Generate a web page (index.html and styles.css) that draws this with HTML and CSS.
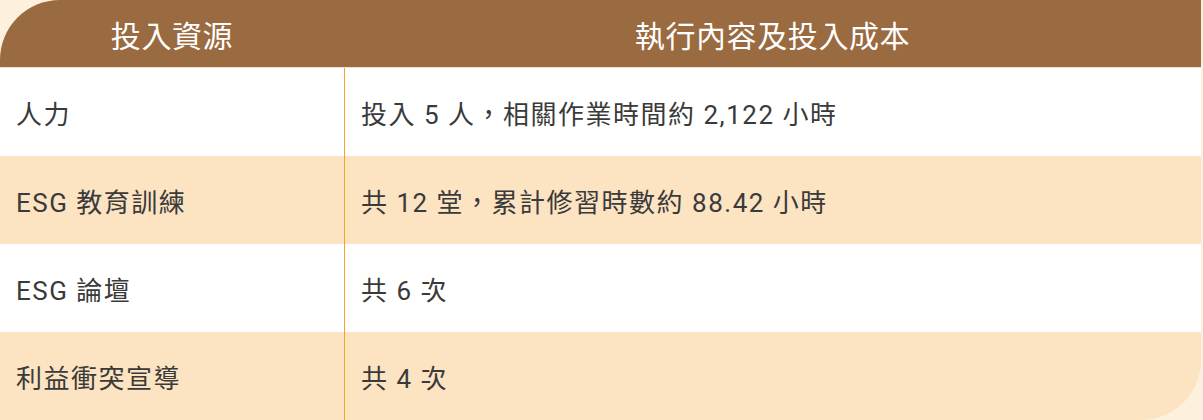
FILE: index.html
```html
<!DOCTYPE html>
<html lang="zh-Hant">
<head>
<meta charset="utf-8">
<title>投入資源</title>
<link rel="stylesheet" href="styles.css">
</head>
<body>
<div class="table">
  <div class="head head-first">投入資源</div>
  <div class="head">執行內容及投入成本</div>

  <div class="cell">人力</div>
  <div class="cell cell-2">投入 5 人，相關作業時間約 2,122 小時</div>

  <div class="cell alt">ESG 教育訓練</div>
  <div class="cell cell-2 alt">共 12 堂，累計修習時數約 88.42 小時</div>

  <div class="cell">ESG 論壇</div>
  <div class="cell cell-2">共 6 次</div>

  <div class="cell alt">利益衝突宣導</div>
  <div class="cell cell-2 alt last">共 4 次</div>
</div>
</body>
</html>
```
FILE: styles.css
```css
html, body {
  margin: 0;
  padding: 0;
  background: #fdf0dc;
}
body {
  width: 1203px;
  height: 420px;
  overflow: hidden;
}
.table {
  width: 1201px;
  display: grid;
  grid-template-columns: 344px 1fr;
  grid-template-rows: 68px repeat(4, 88px);
  font-family: Roboto, "Noto Sans CJK TC", sans-serif;
  color: #3a3a3a;
}
.head {
  background: #9a6a41;
  color: #ffffff;
  font-family: "Noto Sans CJK TC", sans-serif;
  font-size: 30px;
  font-weight: 400;
  letter-spacing: 0.6px;
  display: flex;
  align-items: center;
  justify-content: center;
  border-bottom: 1px solid #f3e1cc;
}
.head-first {
  border-top-left-radius: 60px;
}
.cell {
  background: #ffffff;
  font-size: 26px;
  font-weight: 400;
  letter-spacing: 1.5px;
  display: flex;
  align-items: center;
  padding-left: 16px;
}
.cell-2 {
  border-left: 1px solid #f5a42a;
}
.alt {
  background: #fce3c2;
}
.last {
  border-bottom-right-radius: 60px;
}
```
